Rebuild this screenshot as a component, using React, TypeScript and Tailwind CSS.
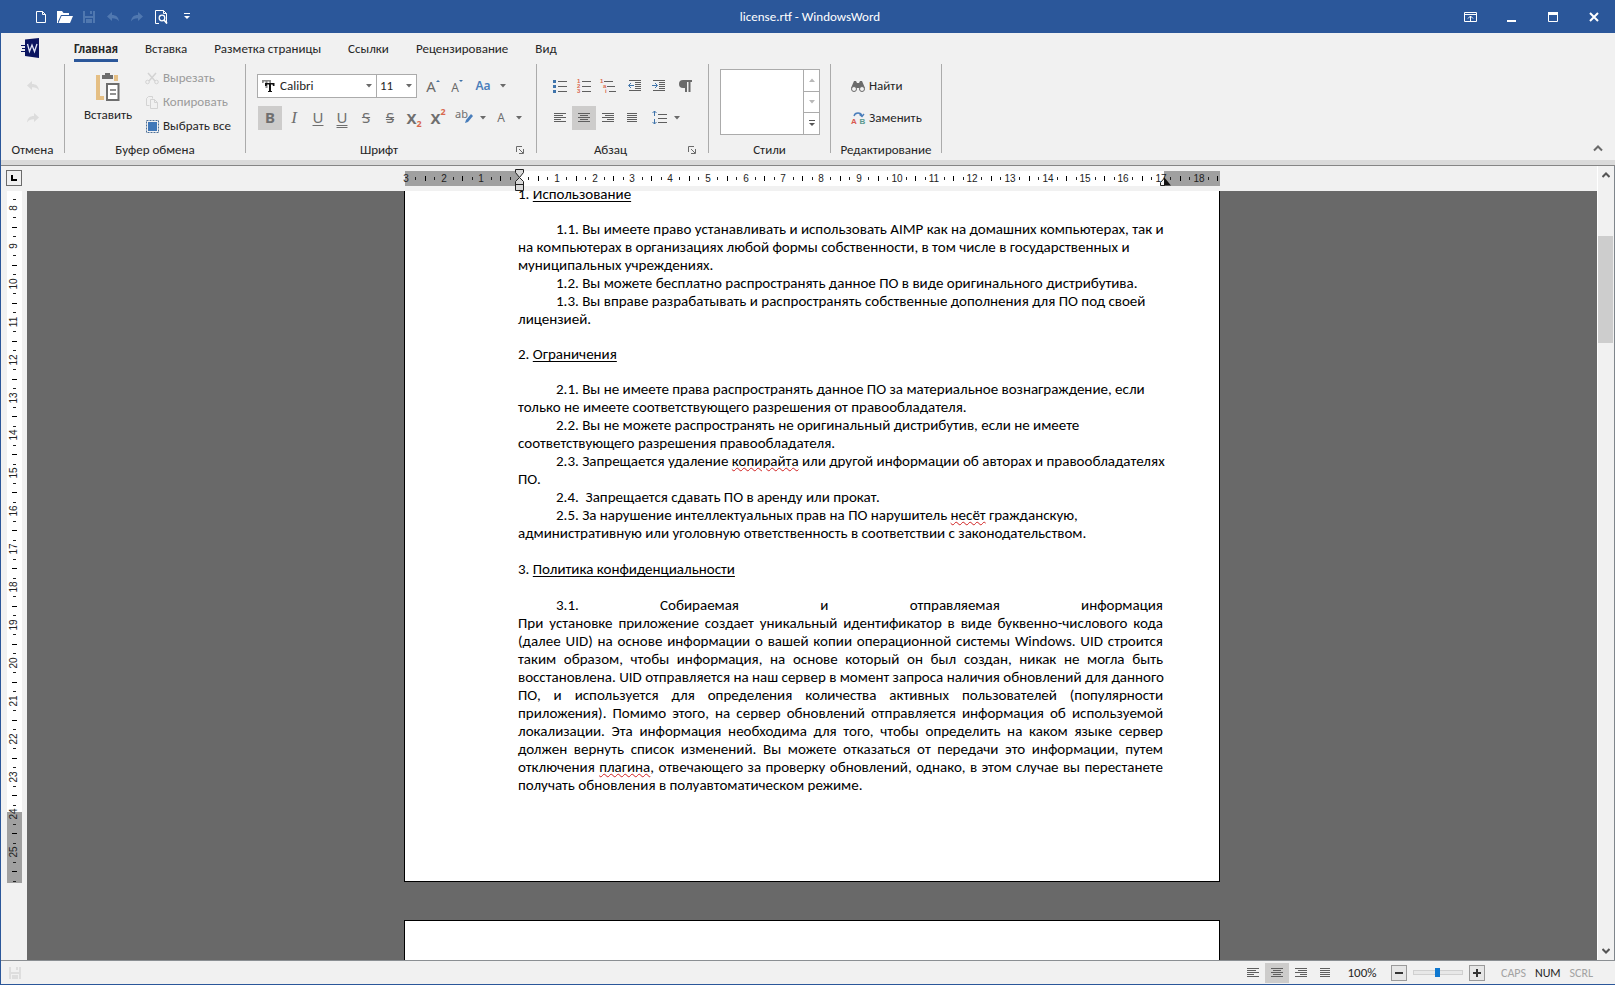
import React from 'react';

interface IconProps {
  className?: string;
}

interface ButtonProps {
  label: string;
  active?: boolean;
  disabled?: boolean;
  children: React.ReactNode;
}

// one centimetre on the rulers
const CM = 37.75;
const CM_V = 37.9;

/* ---------- icons ---------- */

const Svg: React.FC<{ w?: number; h?: number; className?: string; children: React.ReactNode }> = ({ w = 16, h = 16, className, children }) => (
  <svg width={w} height={h} viewBox={`0 0 ${w} ${h}`} fill="none" className={className} aria-hidden="true">
    {children}
  </svg>
);

const UndoIcon: React.FC<IconProps> = ({ className }) => (
  <Svg className={className}>
    <path d="M2 7.5 7 3v3c4 0 6.5 2 7 6.5-1.5-2.5-3.5-3.300-7-3.300V12z" fill="currentColor" />
  </Svg>
);

const RedoIcon: React.FC<IconProps> = ({ className }) => (
  <Svg className={className}>
    <path d="M14 7.5 9 3v3c-4 0-6.5 2-7 6.5 1.5-2.5 3.5-3.300 7-3.300V12z" fill="currentColor" />
  </Svg>
);

const SaveIcon: React.FC<IconProps> = ({ className }) => (
  <Svg className={className}>
    <path d="M2 2h12v12H2z M4 2v5h8V2h-1v3H9V2z M4 9v5h1v-4h6v4h1V9z" fill="currentColor" fillRule="evenodd" />
  </Svg>
);

const Caret: React.FC<IconProps> = ({ className = 'text-[#6a6a6a]' }) => (
  <Svg w={6} h={4} className={className}>
    <path d="M0 0h6L3 3.5z" fill="currentColor" />
  </Svg>
);

const Lines: React.FC<{ rows: [number, number][] }> = ({ rows }) => (
  <Svg>
    {rows.map(([x, w], i) => (
      <rect key={i} x={x} y={3 + i * 2} width={w} height="1" fill="#5f5f5f" />
    ))}
  </Svg>
);

const AlignLeft = () => <Lines rows={[[2, 12], [2, 9], [2, 12], [2, 7], [2, 12]]} />;
const AlignCenter = () => <Lines rows={[[2, 12], [4, 8], [2, 12], [4, 8], [2, 12]]} />;
const AlignRight = () => <Lines rows={[[2, 12], [5, 9], [2, 12], [7, 7], [2, 12]]} />;
const AlignJustify = () => <Lines rows={[[3, 10], [3, 10], [3, 10], [3, 10], [3, 10]]} />;

const Launcher = () => (
  <Svg w={8} h={8}>
    <path d="M.5 6V.5H6M3 3l4 4M7.5 3v4.5H3" stroke="#6a6a6a" />
  </Svg>
);

const IndentIcon: React.FC<{ flip?: boolean }> = ({ flip }) => (
  <Svg>
    <path d="M2 2.5h12M8 4.5h6M8 6.5h6M8 8.5h6M8 10.5h6M2 12.5h12" stroke="#5f5f5f" />
    <path d={flip ? 'M1 7.5h5M4 5l2.500 2.500L4 10' : 'M2 7.5h5M4 5 1.5 7.5 4 10'} stroke="#3f74ab" />
  </Svg>
);

/* ---------- small controls ---------- */

const TitleButton: React.FC<ButtonProps> = ({ label, disabled, children }) => (
  <button type="button" aria-label={label} disabled={disabled} className={`flex h-6 w-6 items-center justify-center ${disabled ? 'text-[#5078b0]' : 'text-white'}`}>
    {children}
  </button>
);

const WindowButton: React.FC<ButtonProps> = ({ label, children }) => (
  <button type="button" aria-label={label} className="flex h-full w-[41px] items-center justify-center text-white">
    {children}
  </button>
);

const ToolButton: React.FC<ButtonProps> = ({ label, active, children }) => (
  <button type="button" aria-label={label} aria-pressed={active} className={`flex h-6 w-6 shrink-0 items-center justify-center ${active ? 'bg-[#cdcccb]' : ''}`}>
    {children}
  </button>
);

const CaretButton: React.FC<{ label: string }> = ({ label }) => (
  <button type="button" aria-label={label} className="flex h-6 w-3 shrink-0 items-center justify-center">
    <Caret />
  </button>
);

const Group: React.FC<{ title: string; launcher?: boolean; className: string; children: React.ReactNode }> = ({ title, launcher, className, children }) => (
  <section className="flex">
    <div className={`flex h-[94px] shrink-0 flex-col ${className}`}>
      <div className="flex-1">{children}</div>
      <div className={`relative flex h-4 items-center justify-center leading-4 ${launcher ? 'pr-6' : ''}`}>
        {title}
        {launcher && (
          <button type="button" aria-label={`${title}: параметры`} className="absolute top-1 right-3">
            <Launcher />
          </button>
        )}
      </div>
    </div>
    <div className="h-[89px] w-px bg-[#ababab]" />
  </section>
);

/* ---------- rulers ---------- */

const H_ZERO = 115;

const HorizontalRuler = () => {
  const ticks: React.ReactNode[] = [];
  for (let q = -12; q <= 74; q++) {
    const x = Math.round(H_ZERO + (q * CM) / 4);
    if (q % 4 === 0) {
      if (q !== 0) {
        ticks.push(
          <text key={q} x={x} y="16" textAnchor="middle" fontSize="10" fill="#222">
            {Math.abs(q / 4)}
          </text>
        );
      }
    } else if (q % 2 === 0) {
      ticks.push(<rect key={q} x={x} y="10" width="1" height="5" fill="#000" />);
    } else {
      ticks.push(<rect key={q} x={x} y="11" width="1" height="3" fill="#222" />);
    }
  }
  return (
    <svg width="816" height="25" className="relative z-10 shrink-0 overflow-visible font-['Liberation_Sans',sans-serif]" aria-label="Линейка">
      <rect x="1" y="5" width="815" height="15" fill="#a0a0a0" />
      <rect x={H_ZERO} y="5" width="645" height="15" fill="#fff" />
      {ticks}
      <path d="M111.5 3.5h8v3l-4 5-4-5z" fill="#d9d9d9" stroke="#222" />
      <path d="M115.5 11.5l4 4v9h-8v-9z" fill="#d9d9d9" stroke="#222" />
      <path d="M111.5 18.5h8" stroke="#222" />
      <path d="M756.5 19.5v-3l4-4.5v7.5z" fill="#f5f5f5" stroke="#222" />
      <path d="M760 11l7 8.5h-7z" fill="#111" />
    </svg>
  );
};

const VerticalRuler = () => {
  const ticks: React.ReactNode[] = [];
  for (let q = 30; q <= 103; q++) {
    const y = Math.round(17 + ((q - 32) * CM_V) / 4);
    if (q % 4 === 0) {
      ticks.push(
        <text key={q} transform={`translate(10 ${y}) rotate(-90)`} textAnchor="middle" fontSize="10" fill="#222">
          {q / 4}
        </text>
      );
    } else if (q % 2 === 0) {
      ticks.push(<rect key={q} x="5" y={y} width="5" height="1" fill="#000" />);
    } else {
      ticks.push(<rect key={q} x="6" y={y} width="3" height="1" fill="#222" />);
    }
  }
  return (
    <svg width="15" height="692" className="ml-[6px] font-['Liberation_Sans',sans-serif]" aria-label="Вертикальная линейка">
      <rect width="15" height="692" fill="#fff" />
      <rect y="621" width="15" height="71" fill="#a0a0a0" />
      {ticks}
    </svg>
  );
};

/* ---------- document ---------- */

const Misspelled: React.FC<{ children: string }> = ({ children }) => (
  <span className="underline decoration-[#d02020] decoration-wavy decoration-1 underline-offset-1">{children}</span>
);

const Heading: React.FC<{ num: string; children: string }> = ({ num, children }) => (
  <h2>
    {num} <span className="underline decoration-1 underline-offset-2">{children}</span>
  </h2>
);

interface LineProps {
  indent?: boolean;
  justify?: boolean;
  children: React.ReactNode;
}

const Line: React.FC<LineProps> = ({ indent, justify, children }) => (
  <span className={`block whitespace-nowrap ${indent ? 'pl-[38px]' : ''} ${justify ? '[text-align-last:justify]' : ''}`}>{children}</span>
);

const DocumentText = () => (
  <article className="-mt-[6px] ml-[113px] w-[645px] text-[15px] leading-[18px] text-black">
    <Heading num="1.">Использование</Heading>
    <div className="my-[17px]">
      <p>
        <Line indent>1.1. Вы имеете право устанавливать и использовать AIMP как на домашних компьютерах, так и</Line>
        <Line>на компьютерах в организациях любой формы собственности, в том числе в государственных и</Line>
        <Line>муниципальных учреждениях.</Line>
      </p>
      <p>
        <Line indent>1.2. Вы можете бесплатно распространять данное ПО в виде оригинального дистрибутива.</Line>
      </p>
      <p>
        <Line indent>1.3. Вы вправе разрабатывать и распространять собственные дополнения для ПО под своей</Line>
        <Line>лицензией.</Line>
      </p>
    </div>
    <Heading num="2.">Ограничения</Heading>
    <div className="mt-[17px] mb-[18px]">
      <p>
        <Line indent>2.1. Вы не имеете права распространять данное ПО за материальное вознаграждение, если</Line>
        <Line>только не имеете соответствующего разрешения от правообладателя.</Line>
      </p>
      <p>
        <Line indent>2.2. Вы не можете распространять не оригинальный дистрибутив, если не имеете</Line>
        <Line>соответствующего разрешения правообладателя.</Line>
      </p>
      <p>
        <Line indent>
          2.3. Запрещается удаление <Misspelled>копирайта</Misspelled> или другой информации об авторах и правообладателях
        </Line>
        <Line>ПО.</Line>
      </p>
      <p>
        <Line indent>2.4.&nbsp; Запрещается сдавать ПО в аренду или прокат.</Line>
      </p>
      <p>
        <Line indent>
          2.5. За нарушение интеллектуальных прав на ПО нарушитель <Misspelled>несёт</Misspelled> гражданскую,
        </Line>
        <Line>административную или уголовную ответственность в соответствии с законодательством.</Line>
      </p>
    </div>
    <Heading num="3.">Политика конфиденциальности</Heading>
    <p className="mt-[18px]">
      <Line indent justify>3.1. Собираемая и отправляемая информация</Line>
      <Line justify>При установке приложение создает уникальный идентификатор в виде буквенно-числового кода</Line>
      <Line justify>(далее UID) на основе информации о вашей копии операционной системы Windows. UID строится</Line>
      <Line justify>таким образом, чтобы информация, на основе который он был создан, никак не могла быть</Line>
      <Line justify>восстановлена. UID отправляется на наш сервер в момент запроса наличия обновлений для данного</Line>
      <Line justify>ПО, и используется для определения количества активных пользователей (популярности</Line>
      <Line justify>приложения). Помимо этого, на сервер обновлений отправляется информация об используемой</Line>
      <Line justify>локализации. Эта информация необходима для того, чтобы определить на каком языке сервер</Line>
      <Line justify>должен вернуть список изменений. Вы можете отказаться от передачи это информации, путем</Line>
      <Line justify>
        отключения <Misspelled>плагина</Misspelled>, отвечающего за проверку обновлений, однако, в этом случае вы перестанете
      </Line>
      <Line>получать обновления в полуавтоматическом режиме.</Line>
    </p>
  </article>
);

/* ---------- window parts ---------- */

const TitleBar = () => (
  <header className="relative flex h-[33px] shrink-0 items-center justify-between bg-[#2b579a] text-white">
    <div className="ml-7 flex items-center">
      <TitleButton label="Создать">
        <Svg><path d="M3.5 2.5h6l3 3v8h-9zM9.5 2.5v3h3" stroke="currentColor" /></Svg>
      </TitleButton>
      <TitleButton label="Открыть">
        <Svg><path d="M0 2h5l1.500 2H12v2H4L1 12.500V14H0z" fill="currentColor" /><path d="M4.500 7H16l-3 7H1.500z" fill="currentColor" /></Svg>
      </TitleButton>
      <TitleButton label="Сохранить" disabled><SaveIcon /></TitleButton>
      <TitleButton label="Отменить" disabled><UndoIcon /></TitleButton>
      <TitleButton label="Вернуть" disabled><RedoIcon /></TitleButton>
      <TitleButton label="Просмотр печати">
        <Svg>
          <path d="M6 14.5H2.5v-13h8l3 3V14.5M10.5 1.5v3h3" stroke="currentColor" />
          <circle cx="9" cy="9" r="2.800" fill="#2b579a" stroke="currentColor" strokeWidth="1.300" />
          <path d="M11 11l3 3.500" stroke="currentColor" strokeWidth="1.800" />
        </Svg>
      </TitleButton>
      <button type="button" aria-label="Настройка панели" className="flex h-6 w-7 items-center justify-center">
        <Svg w={6} h={7}><path d="M0 .5h6" stroke="#fff" /><path d="M0 3h6L3 6z" fill="#fff" /></Svg>
      </button>
    </div>
    <h1 className="pointer-events-none absolute inset-x-0 pl-1 text-center text-[13px]">license.rtf - WindowsWord</h1>
    <div className="mr-px flex h-full">
      <WindowButton label="Параметры ленты">
        <Svg w={13} h={10}><path d="M.5.5h12v9H.5zM0 2.5h13M6.5 9V4M4 6.5 6.5 4 9 6.5" stroke="currentColor" /></Svg>
      </WindowButton>
      <WindowButton label="Свернуть">
        <Svg w={10} h={10}><path d="M0 8h9v2H0z" fill="currentColor" /></Svg>
      </WindowButton>
      <WindowButton label="Развернуть">
        <Svg w={10} h={10}><path d="M.5.5h9v9h-9z" stroke="currentColor" /><path d="M0 0h10v3H0z" fill="currentColor" /></Svg>
      </WindowButton>
      <WindowButton label="Закрыть">
        <Svg w={10} h={10}><path d="M1 1l8 8M9 1L1 9" stroke="currentColor" strokeWidth="2" /></Svg>
      </WindowButton>
    </div>
  </header>
);

const tabs = ['Главная', 'Вставка', 'Разметка страницы', 'Ссылки', 'Рецензирование', 'Вид'];

const TabBar = () => (
  <nav className="flex h-[31px] items-start">
    <button type="button" aria-label="Файл" className="mt-1 ml-[19px]">
      <Svg w={20} h={22}>
        <path d="M5 2.5 19 1v20L5 19z" fill="#0b1560" />
        <path d="M1 8.5h4M2 11.5h4M1 14.5h4" stroke="#0b1560" />
        <path d="M7.5 7l2 7.500L12 8l2.500 6.500L17 7" stroke="#dfe4f5" strokeWidth="1.300" />
      </Svg>
    </button>
    <div className="ml-[34px] flex gap-[27px]">
      {tabs.map((tab, i) => (
        <button key={tab} type="button" className={`mt-2 h-[21px] border-b-3 pb-1 leading-4 ${i === 0 ? 'border-[#2b579a] font-bold' : 'border-transparent'}`}>
          {tab}
        </button>
      ))}
    </div>
  </nav>
);

const ClipboardGroup = () => (
  <Group title="Буфер обмена" className="w-[180px]">
    <div className="flex">
      <button type="button" className="ml-[18px] flex w-[50px] flex-col items-center pt-2">
        <Svg w={26} h={30}>
          <path d="M3 3v23h6" stroke="#e5bf84" strokeWidth="4" />
          <path d="M19 3h4v6h-4z" fill="#e5bf84" />
          <path d="M7 3h3V1h5v2h3v4H7z" fill="#6d6d6d" />
          <path d="M12 12h11.500v16H12z" fill="#fff" stroke="#6d6d6d" strokeWidth="2" />
          <path d="M15 18h6M15 22h6" stroke="#6d6d6d" strokeWidth="1.500" />
        </Svg>
        <span className="mt-[5px] leading-4">Вставить</span>
      </button>
      <div className="mt-[2px] ml-[11px] flex flex-col">
        <button type="button" disabled className="flex h-6 items-center gap-[3px] text-[#9b9b9b]">
          <Svg>
            <path d="M4 3l7 8M12 3l-7 8" stroke="#d3d3d3" strokeWidth="1.500" />
            <circle cx="3.500" cy="12" r="1.800" stroke="#d3d3d3" /><circle cx="12.500" cy="12" r="1.800" stroke="#d3d3d3" />
          </Svg>
          Вырезать
        </button>
        <button type="button" disabled className="flex h-6 items-center gap-[3px] text-[#9b9b9b]">
          <Svg><path d="M5.5 11.5h-3v-7l2-2h4v2M6.5 5.5h4l3 3v6h-7zM10.5 5.5v3h3" stroke="#d3d3d3" /></Svg>
          Копировать
        </button>
        <button type="button" className="flex h-6 items-center gap-[3px]">
          <Svg><path d="M4 4h9v9H4z" fill="#3f77b8" /><path d="M2.500 2.500h12v12h-12z" stroke="#4d6f96" strokeDasharray="2 1" /></Svg>
          Выбрать все
        </button>
      </div>
    </div>
  </Group>
);

const FontGroup = () => (
  <Group title="Шрифт" launcher className="w-[290px]">
    <div className="ml-[11px] flex items-center pt-[10px]">
      <label className="flex h-6 w-[120px] items-center border border-[#ababab] bg-white pl-1">
        <Svg w={13} h={14}>
          <path d="M0 1h9v3H7.500L7 2.500H5.500V9H3.500V2.500H2L1.500 4H0z" fill="#8a8a8a" />
          <path d="M3 4h9.500v3H11l-.5-1.500H9V12h1v1H6v-1h1V5.500H5L4.500 7H3z" fill="#111" />
        </Svg>
        <select aria-label="Шрифт" className="ml-[5px] flex-1 appearance-none bg-transparent outline-none">
          <option>Calibri</option>
        </select>
        <Caret className="mr-1 shrink-0 text-[#6a6a6a]" />
      </label>
      <label className="-ml-px flex h-6 w-[41px] items-center border border-[#ababab] bg-white">
        <select aria-label="Размер шрифта" className="w-7 appearance-none bg-transparent pl-[3px] outline-none">
          <option>11</option>
        </select>
        <Caret className="ml-px text-[#6a6a6a]" />
      </label>
      <div className="ml-1 flex items-center font-['Noto_Sans',sans-serif] text-[#6a6a6a]">
        <ToolButton label="Увеличить размер">
          <span className="text-[15px]">A</span>
          <Svg w={4} h={12}><path d="M0 2l2-2 2 2z" fill="#3f74ab" /></Svg>
        </ToolButton>
        <ToolButton label="Уменьшить размер">
          <span className="pt-1 text-[12px]">A</span>
          <Svg w={4} h={12}><path d="M0 0l2 2 2-2z" fill="#3f74ab" /></Svg>
        </ToolButton>
        <button type="button" className="h-6 w-7 text-[12px] font-semibold text-[#4a7ebb]">Aa</button>
        <CaretButton label="Регистр" />
      </div>
    </div>
    <div className="mt-2 ml-3 flex items-center font-['Noto_Sans',sans-serif] text-[15px] text-[#6f6f6f]">
      <ToolButton label="Полужирный" active><b className="-mt-px">B</b></ToolButton>
      <ToolButton label="Курсив"><i className="font-['Liberation_Serif',serif] text-[17px]">I</i></ToolButton>
      <ToolButton label="Подчёркнутый"><span className="-mt-px underline decoration-1 underline-offset-2">U</span></ToolButton>
      <ToolButton label="Двойное подчёркивание"><span className="-mt-px underline decoration-double decoration-1 underline-offset-2">U</span></ToolButton>
      <ToolButton label="Зачёркнутый"><span className="-mt-px line-through decoration-1">S</span></ToolButton>
      <ToolButton label="Двойное зачёркивание"><span className="-mt-px line-through decoration-double decoration-1">S</span></ToolButton>
      <ToolButton label="Подстрочный">
        <b>X</b><span className="self-end text-[9px] font-bold text-[#d9694f]">2</span>
      </ToolButton>
      <ToolButton label="Надстрочный">
        <b>X</b><span className="self-start text-[9px] leading-3 font-bold text-[#d9694f]">2</span>
      </ToolButton>
      <button type="button" aria-label="Цвет выделения" className="ml-[5px] flex h-6 w-[18px] items-start text-[11px] leading-4">
        ab
        <Svg w={9} h={20} className="-ml-1 shrink-0"><path d="M1 17l1-3 5-6 2 2-5 6z" fill="#4a7ebb" /></Svg>
      </button>
      <div className="ml-1">
        <CaretButton label="Цвета выделения" />
      </div>
      <button type="button" aria-label="Цвет текста" className="h-6 w-6 text-[12px]">A</button>
      <CaretButton label="Цвета текста" />
    </div>
  </Group>
);

const ParagraphGroup = () => (
  <Group title="Абзац" launcher className="w-[171px]">
    <div className="ml-[11px] flex items-center pt-[10px]">
      <ToolButton label="Маркеры">
        <Svg>
          <path d="M6 3.5h9M6 8.5h9M6 13.5h9" stroke="#5f5f5f" />
          <path d="M1 2h3v3H1zM1 7h3v3H1zM1 12h3v3H1z" fill="#3f74ab" />
        </Svg>
      </ToolButton>
      <ToolButton label="Нумерация">
        <Svg className="overflow-visible font-['Liberation_Sans',sans-serif]">
          <path d="M6 3.5h9M6 8.5h9M6 13.5h9" stroke="#5f5f5f" />
          <g fill="#d9694f" fontSize="6" fontWeight="bold"><text x="1" y="5">1</text><text x="1" y="10">2</text><text x="1" y="15">3</text></g>
        </Svg>
      </ToolButton>
      <ToolButton label="Многоуровневый список">
        <Svg className="overflow-visible font-['Liberation_Sans',sans-serif]">
          <path d="M4 3.5h9M7 8.5h8M9 13.5h7" stroke="#5f5f5f" />
          <g fill="#d9694f" fontSize="6" fontWeight="bold"><text x="0" y="5">1</text><text x="3" y="10">a</text><text x="5" y="15">i</text></g>
        </Svg>
      </ToolButton>
      <div className="ml-[3px] flex">
        <ToolButton label="Уменьшить отступ"><IndentIcon /></ToolButton>
        <ToolButton label="Увеличить отступ"><IndentIcon flip /></ToolButton>
      </div>
      <div className="ml-[2px]">
        <ToolButton label="Непечатаемые знаки">
          <Svg>
            <path d="M6 3h9M9 2v12M12.5 2v12" stroke="#6a6a6a" strokeWidth="2" />
            <path d="M9 2v8H6a4 4 0 010-8z" fill="#6a6a6a" />
          </Svg>
        </ToolButton>
      </div>
    </div>
    <div className="mt-2 ml-[11px] flex items-center">
      <ToolButton label="По левому краю"><AlignLeft /></ToolButton>
      <ToolButton label="По центру" active><AlignCenter /></ToolButton>
      <ToolButton label="По правому краю"><AlignRight /></ToolButton>
      <ToolButton label="По ширине"><AlignJustify /></ToolButton>
      <button type="button" aria-label="Интервал" className="ml-[3px] flex h-6 w-6 items-center justify-center">
        <Svg>
          <path d="M7 4.5h9M7 8.5h9M7 12.5h9" stroke="#5f5f5f" />
          <path d="M3.5 1v5M3.5 9v5M1.500 3l2-2 2 2M1.500 12l2 2 2-2" stroke="#3f74ab" />
        </Svg>
      </button>
      <CaretButton label="Варианты интервала" />
    </div>
  </Group>
);

const StylesGroup = () => (
  <Group title="Стили" className="w-[121px]">
    <div className="mt-[5px] ml-[11px] flex h-[66px] w-[100px] border border-[#ababab] bg-white">
      <div className="flex-1" />
      <div className="flex w-4 flex-col divide-y divide-[#ababab] border-l border-[#ababab] *:flex *:flex-1 *:items-center *:justify-center">
        <button type="button" aria-label="Предыдущие стили" disabled>
          <Caret className="rotate-180 text-[#b8b8b8]" />
        </button>
        <button type="button" aria-label="Следующие стили" disabled>
          <Caret className="text-[#b8b8b8]" />
        </button>
        <button type="button" aria-label="Все стили">
          <Svg w={6} h={7}><path d="M0 .5h6" stroke="#555" /><path d="M0 3h6L3 6z" fill="#555" /></Svg>
        </button>
      </div>
    </div>
  </Group>
);

const EditGroup = () => (
  <Group title="Редактирование" className="w-[110px]">
    <button type="button" className="mt-[10px] ml-[19px] flex h-6 items-center gap-[3px]">
      <Svg>
        <path d="M4 3h2l1 2h2l1-2h2l3 7H1z" fill="#6a6a6a" />
        <circle cx="4" cy="11" r="2.500" fill="#f1f1f1" stroke="#6a6a6a" /><circle cx="12" cy="11" r="2.500" fill="#f1f1f1" stroke="#6a6a6a" />
      </Svg>
      Найти
    </button>
    <button type="button" className="mt-2 ml-[19px] flex h-6 items-center gap-[3px]">
      <Svg className="overflow-visible font-['Liberation_Sans',sans-serif]">
        <path d="M4 6c1-4 7-4 8 0M9.500 4.500 12 6.500l2-2.500" stroke="#4a7ebb" strokeWidth="1.300" />
        <g fontSize="8" fontWeight="bold"><text x="1" y="14" fill="#d9594f">A</text><text x="9.500" y="14" fill="#5a9a90">B</text></g>
      </Svg>
      Заменить
    </button>
  </Group>
);

const Ribbon = () => (
  <div className="relative shrink-0 text-[#262626]">
    <TabBar />
    <div className="flex h-[96px]">
      <Group title="Отмена" className="w-[63px]">
        <div className="flex flex-col items-center gap-2 pt-[10px] text-[#dcdcdc]">
          <button type="button" aria-label="Отменить" disabled className="flex h-6 w-6 items-center justify-center"><UndoIcon /></button>
          <button type="button" aria-label="Вернуть" disabled className="flex h-6 w-6 items-center justify-center"><RedoIcon /></button>
        </div>
      </Group>
      <ClipboardGroup />
      <FontGroup />
      <ParagraphGroup />
      <StylesGroup />
      <EditGroup />
      <button type="button" aria-label="Свернуть ленту" className="mr-3 ml-auto self-end pb-2">
        <Svg w={10} h={7}><path d="M1 5.500l4-4 4 4" stroke="#6a6a6a" strokeWidth="2" /></Svg>
      </button>
    </div>
    <div className="h-[6px] border-b border-[#858585] bg-[#dadada]" />
  </div>
);

const ScrollBar = () => (
  <div className="flex w-[17px] shrink-0 flex-col items-stretch border-l border-white bg-[#f1f1f1]">
    <button type="button" aria-label="Прокрутить вверх" className="flex h-[18px] items-center justify-center">
      <Svg w={8} h={6}><path d="M.5 5l3.500-3.500L7.500 5" stroke="#555" strokeWidth="2" /></Svg>
    </button>
    <div className="mt-[52px] mr-px h-[107px] bg-[#cdcdcd]" />
    <button type="button" aria-label="Прокрутить вниз" className="mt-auto flex h-[18px] items-center justify-center">
      <Svg w={8} h={6}><path d="M.5 1L4 4.500 7.500 1" stroke="#555" strokeWidth="2" /></Svg>
    </button>
  </div>
);

const Workspace = () => (
  <div className="flex min-h-0 flex-1 border-r border-[#7f868c]">
    <div className="flex w-[26px] shrink-0 flex-col overflow-hidden">
      <div className="h-[25px] pt-1 pl-[5px]">
        <button type="button" aria-label="Табуляция" className="block h-4 w-4 border border-[#6b6b6b]">
          <Svg w={14} h={14}><path d="M4 4h2v4h4v2H4z" fill="#000" /></Svg>
        </button>
      </div>
      <VerticalRuler />
    </div>
    <div className="flex min-w-0 flex-1 flex-col">
      <div className="flex h-[25px] shrink-0 justify-center">
        <HorizontalRuler />
      </div>
      <main className="min-h-0 flex-1 overflow-hidden bg-[#696969]">
        <div className="mx-auto h-[691px] w-[816px] overflow-hidden border border-t-0 border-black bg-white">
          <DocumentText />
        </div>
        <div className="mx-auto mt-[38px] h-[400px] w-[816px] border border-black bg-white" />
      </main>
    </div>
    <ScrollBar />
  </div>
);

const StatusBar = () => (
  <footer className="flex h-6 shrink-0 items-center border-t border-[#8b8f93] text-[13px] text-[#262626]">
    <SaveIcon className="ml-[6px] text-[#dedede]" />
    <div className="ml-auto flex *:h-5">
      <ToolButton label="По левому краю"><AlignLeft /></ToolButton>
      <ToolButton label="По центру" active><AlignCenter /></ToolButton>
      <ToolButton label="По правому краю"><AlignRight /></ToolButton>
      <ToolButton label="По ширине"><AlignJustify /></ToolButton>
    </div>
    <span className="w-[54px] pr-1 text-center">100%</span>
    <button type="button" aria-label="Уменьшить масштаб" className="flex h-4 w-4 items-center justify-center border border-[#9a9a9a] bg-[#e6e6e6]">
      <Svg w={8} h={8}><path d="M0 4h8" stroke="#333" strokeWidth="2" /></Svg>
    </button>
    <input
      type="range"
      aria-label="Масштаб"
      defaultValue={48}
      className="mx-[6px] h-4 w-[50px] appearance-none bg-transparent [&::-webkit-slider-runnable-track]:h-[5px] [&::-webkit-slider-runnable-track]:border [&::-webkit-slider-runnable-track]:border-[#d0d0d0] [&::-webkit-slider-runnable-track]:bg-[#e8e8e8] [&::-webkit-slider-thumb]:-mt-[3px] [&::-webkit-slider-thumb]:h-[9px] [&::-webkit-slider-thumb]:w-[5px] [&::-webkit-slider-thumb]:appearance-none [&::-webkit-slider-thumb]:bg-[#0f78d0]"
    />
    <button type="button" aria-label="Увеличить масштаб" className="flex h-4 w-4 items-center justify-center border border-[#9a9a9a] bg-[#e6e6e6]">
      <Svg w={8} h={8}><path d="M0 4h8M4 0v8" stroke="#333" strokeWidth="2" /></Svg>
    </button>
    <div className="mr-[22px] ml-4 flex w-[92px] justify-between text-[12px] text-[#a3a3a3]">
      <span>CAPS</span>
      <span className="text-[#262626]">NUM</span>
      <span>SCRL</span>
    </div>
  </footer>
);

export default function App() {
  return (
    <div className="flex h-screen flex-col overflow-hidden border-b border-l border-[#2b579a] bg-[#f1f1f1] font-['Carlito','Calibri','Noto_Sans',sans-serif] text-[13px]">
      <TitleBar />
      <Ribbon />
      <Workspace />
      <StatusBar />
    </div>
  );
}
